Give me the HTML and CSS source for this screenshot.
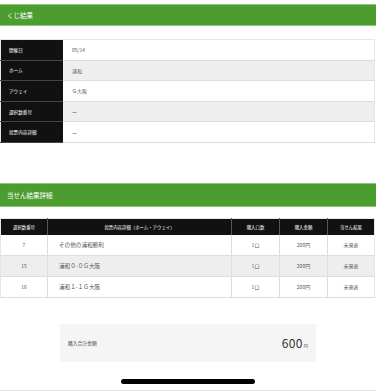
FILE: index.html
```html
<!DOCTYPE html>
<html lang="ja">
  <head>
    <meta charset="utf-8">
    <title>くじ結果</title>
    <link rel="stylesheet" href="styles.css">
  </head>
  <body>

  <div class="page">
    <h1 class="heading heading-top">くじ結果</h1>

    <table class="info">
      <tr><th>開催日</th><td>05/14</td></tr>
      <tr class="alt"><th>ホーム</th><td>浦和</td></tr>
      <tr><th>アウェイ</th><td>Ｇ大阪</td></tr>
      <tr class="alt"><th>選択数番号</th><td>ー</td></tr>
      <tr><th>投票内容詳細</th><td>ー</td></tr>
    </table>

    <h2 class="heading heading-result">当せん結果詳細</h2>

    <table class="result">
      <thead>
        <tr>
          <th class="c-no">選択数番号</th>
          <th class="c-detail">投票内容詳細（ホーム・アウェイ）</th>
          <th class="c-qty">購入口数</th>
          <th class="c-price">購入金額</th>
          <th class="c-status">当せん結果</th>
        </tr>
      </thead>
      <tbody>
        <tr>
          <td>7</td>
          <td class="left">その他の浦和勝利</td>
          <td>1口</td>
          <td>200円</td>
          <td>未発表</td>
        </tr>
        <tr class="alt">
          <td>15</td>
          <td class="left">浦和０-０Ｇ大阪</td>
          <td>1口</td>
          <td>200円</td>
          <td>未発表</td>
        </tr>
        <tr>
          <td>16</td>
          <td class="left">浦和１-１Ｇ大阪</td>
          <td>1口</td>
          <td>200円</td>
          <td>未発表</td>
        </tr>
      </tbody>
    </table>

    <div class="total">
      <span class="total-label">購入合計金額</span>
      <span class="total-value">600<small>円</small></span>
    </div>

    <div class="home-bar"></div>
  </div>

  </body>
</html>
```

FILE: styles.css
```css
html {
  height: 100%;
}
body {
  margin: 0;
  padding: 0;
  background: #ffffff;
  color: #333333;
  font-family: "Noto Sans CJK JP", "Noto Sans", sans-serif;
  height: 100%;
}

.page {
  display: flex;
  flex-direction: column;
  height: 390px;
  border-bottom: 1px solid #e6e6e6;
}

.heading {
  margin: 0;
  background-color: #4c9d2f;
  color: #ffffff;
  font-weight: normal;
  padding-left: 7px;
  border-top: 1px solid #8cc47a;
  border-bottom: 1px solid #8cc47a;
}
.heading-top {
  margin-top: 4px;
  height: 20px;
  line-height: 20px;
  font-size: 6.5px;
}
.heading-result {
  margin-top: 40px;
  height: 22px;
  line-height: 22px;
  font-size: 6.5px;
}

table {
  border-collapse: collapse;
  width: 375px;
}

.info {
  margin-top: 13px;
  border: 1px solid #e6e6e6;
}
.info th {
  width: 54px;
  height: 19.6px;
  padding: 0 0 0 8px;
  background-color: #111111;
  color: #ffffff;
  font-size: 4.6px;
  font-weight: normal;
  text-align: left;
  border-bottom: 1px solid #444444;
}
.info td {
  padding: 0 0 0 9px;
  font-size: 5px;
  color: #555555;
  border-bottom: 1px solid #dddddd;
}
.info tr.alt td {
  background-color: #eeeeee;
}

.result {
  margin-top: 11px;
  border: 1px solid #e6e6e6;
}
.result th {
  height: 16px;
  padding: 0;
  background-color: #111111;
  color: #ffffff;
  font-size: 4.4px;
  font-weight: normal;
  border-right: 1px solid #555555;
}
.result th:last-child {
  border-right: none;
}
.c-no {
  width: 46px;
}
.c-qty, .c-price {
  width: 47px;
}
.c-status {
  width: 46px;
}
.result td {
  height: 20px;
  padding: 0;
  text-align: center;
  font-size: 5px;
  color: #555555;
  border-right: 1px solid #dddddd;
  border-bottom: 1px solid #dddddd;
}
.result td:last-child {
  border-right: none;
}
.result td.left {
  text-align: left;
  padding-left: 11px;
  font-size: 5.6px;
}
.result tr.alt td {
  background-color: #eeeeee;
}

.total {
  align-self: center;
  margin-top: 26px;
  width: 240px;
  height: 38px;
  padding: 0 8px;
  background-color: #f5f5f5;
  display: flex;
  align-items: center;
  justify-content: space-between;
}
.total-label {
  font-size: 4.8px;
  color: #444444;
}
.total-value {
  font-size: 12px;
  letter-spacing: 0.3px;
  color: #333333;
}
.total-value small {
  font-size: 4px;
  margin-left: 1px;
}

.home-bar {
  align-self: center;
  margin-top: 17px;
  width: 134px;
  height: 5px;
  border-radius: 3px;
  background-color: #000000;
}
```
